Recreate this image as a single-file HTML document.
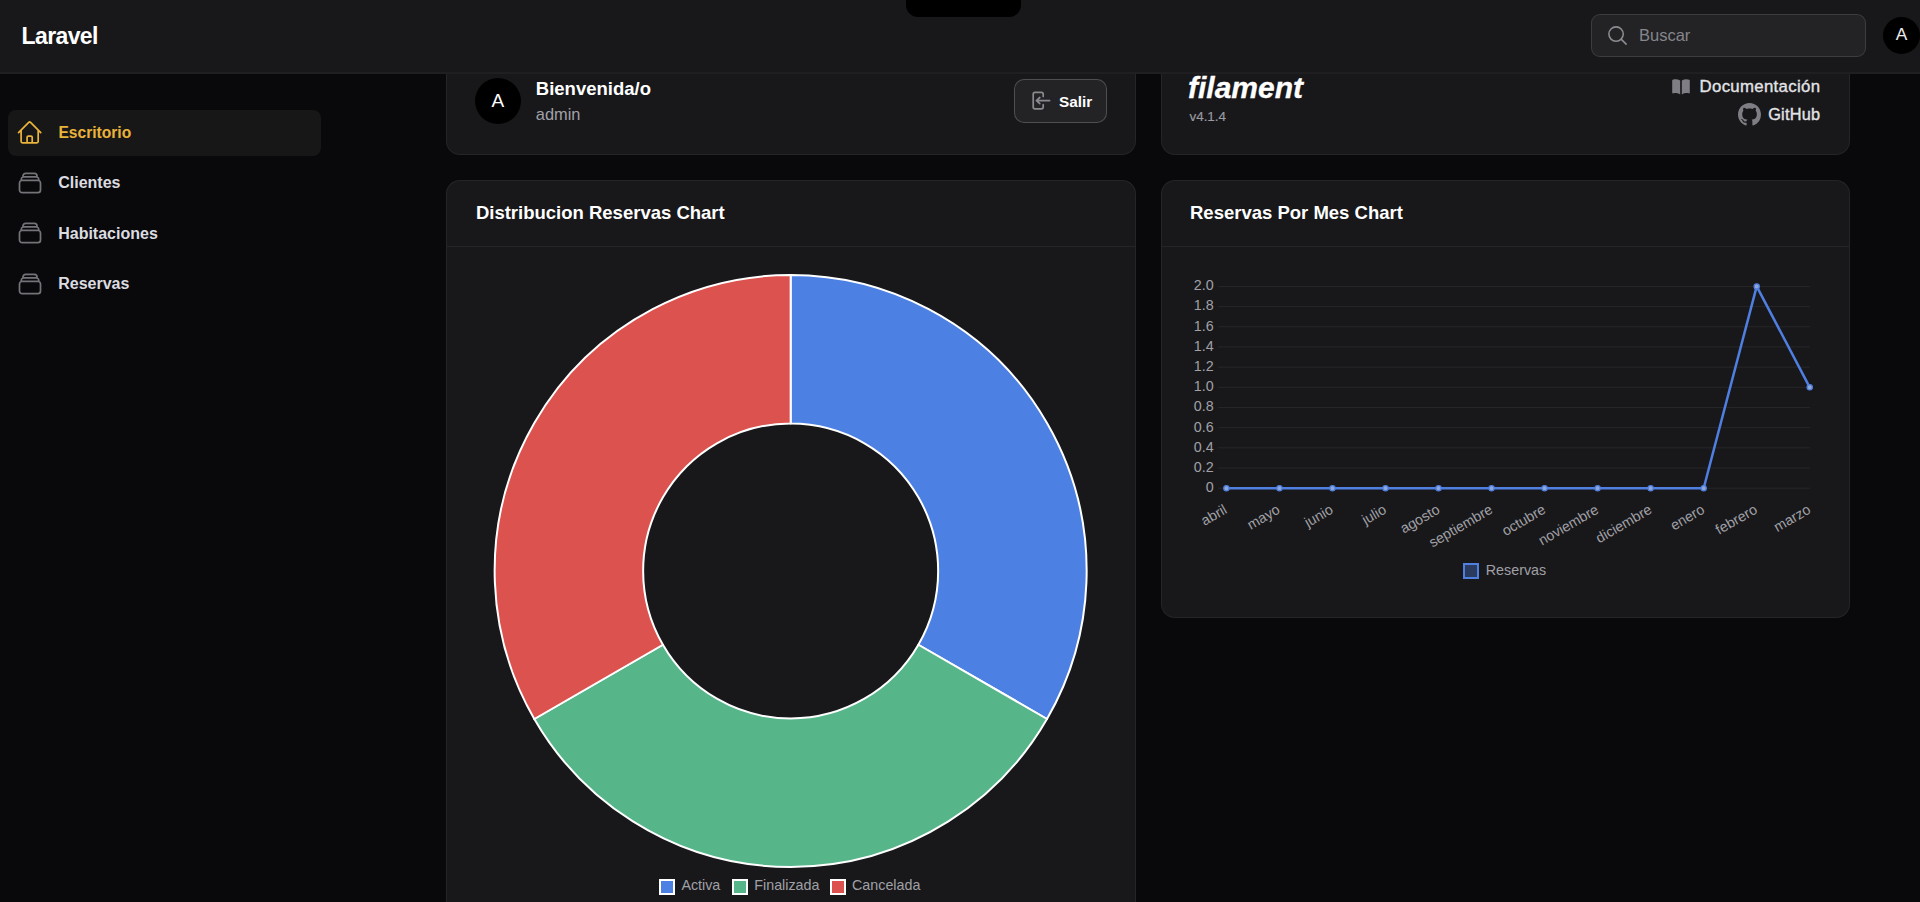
<!DOCTYPE html>
<html><head><meta charset="utf-8"><style>
html,body{margin:0;padding:0;}
body{width:1920px;height:902px;overflow:hidden;background:#09090b;position:relative;font-family:"Liberation Sans",sans-serif;}
.t{position:absolute;white-space:nowrap;}
</style></head><body>
<div style="position:absolute;left:8px;top:109.5px;width:313px;height:46.0px;background:#171718;border-radius:8px;"></div>
<svg style="position:absolute;left:16.4px;top:118.8px" width="27.3" height="27.3" viewBox="0 0 24 24" fill="none" stroke="#eab33a" stroke-width="1.5" stroke-linecap="round" stroke-linejoin="round"><path d="m2.25 12 8.954-8.955c.44-.439 1.152-.439 1.591 0L21.75 12M4.5 9.75v10.125c0 .621.504 1.125 1.125 1.125H9.75v-4.875c0-.621.504-1.125 1.125-1.125h2.25c.621 0 1.125.504 1.125 1.125V21h4.125c.621 0 1.125-.504 1.125-1.125V9.75M8.25 21h8.25"/></svg>
<div class="t" style="left:58.40px;top:124.99px;font-size:15.6px;line-height:15.6px;font-weight:700;color:#eab33a;">Escritorio</div>
<svg style="position:absolute;left:16.3px;top:168.8px" width="28" height="28" viewBox="0 0 24 24" fill="none" stroke="#737379" stroke-width="1.5" stroke-linecap="round" stroke-linejoin="round"><path d="M6 6.878V6a2.25 2.25 0 0 1 2.25-2.25h7.5A2.25 2.25 0 0 1 18 6v.878m-12 0c.235-.083.487-.128.75-.128h10.5c.263 0 .515.045.75.128m-12 0A2.25 2.25 0 0 0 4.5 9v.878m13.5-3A2.25 2.25 0 0 1 19.5 9v.878m0 0a2.246 2.246 0 0 0-.75-.128H5.25c-.263 0-.515.045-.75.128m15 0A2.25 2.25 0 0 1 21 12v6a2.25 2.25 0 0 1-2.25 2.25H5.25A2.25 2.25 0 0 1 3 18v-6c0-.98.626-1.813 1.5-2.122"/></svg>
<div class="t" style="left:58.20px;top:175.06px;font-size:16px;line-height:16px;font-weight:700;color:#dcdce0;">Clientes</div>
<svg style="position:absolute;left:16.3px;top:219.4px" width="28" height="28" viewBox="0 0 24 24" fill="none" stroke="#737379" stroke-width="1.5" stroke-linecap="round" stroke-linejoin="round"><path d="M6 6.878V6a2.25 2.25 0 0 1 2.25-2.25h7.5A2.25 2.25 0 0 1 18 6v.878m-12 0c.235-.083.487-.128.75-.128h10.5c.263 0 .515.045.75.128m-12 0A2.25 2.25 0 0 0 4.5 9v.878m13.5-3A2.25 2.25 0 0 1 19.5 9v.878m0 0a2.246 2.246 0 0 0-.75-.128H5.25c-.263 0-.515.045-.75.128m15 0A2.25 2.25 0 0 1 21 12v6a2.25 2.25 0 0 1-2.25 2.25H5.25A2.25 2.25 0 0 1 3 18v-6c0-.98.626-1.813 1.5-2.122"/></svg>
<div class="t" style="left:58.20px;top:225.56px;font-size:16px;line-height:16px;font-weight:700;color:#dcdce0;">Habitaciones</div>
<svg style="position:absolute;left:16.3px;top:270.0px" width="28" height="28" viewBox="0 0 24 24" fill="none" stroke="#737379" stroke-width="1.5" stroke-linecap="round" stroke-linejoin="round"><path d="M6 6.878V6a2.25 2.25 0 0 1 2.25-2.25h7.5A2.25 2.25 0 0 1 18 6v.878m-12 0c.235-.083.487-.128.75-.128h10.5c.263 0 .515.045.75.128m-12 0A2.25 2.25 0 0 0 4.5 9v.878m13.5-3A2.25 2.25 0 0 1 19.5 9v.878m0 0a2.246 2.246 0 0 0-.75-.128H5.25c-.263 0-.515.045-.75.128m15 0A2.25 2.25 0 0 1 21 12v6a2.25 2.25 0 0 1-2.25 2.25H5.25A2.25 2.25 0 0 1 3 18v-6c0-.98.626-1.813 1.5-2.122"/></svg>
<div class="t" style="left:58.20px;top:276.46px;font-size:16px;line-height:16px;font-weight:700;color:#dcdce0;">Reservas</div>
<div style="position:absolute;left:446px;top:-20px;width:689.5px;height:174.5px;background:#18181b;border:1px solid rgba(255,255,255,0.06);border-radius:14px;box-sizing:border-box;"></div>
<div style="position:absolute;left:475px;top:77.8px;width:46px;height:46.0px;background:#000;border-radius:50%;"></div>
<div class="t" style="left:491.60px;top:91.42px;font-size:19px;line-height:19px;font-weight:400;color:#fff;">A</div>
<div class="t" style="left:535.80px;top:79.74px;font-size:18.5px;line-height:18.5px;font-weight:700;color:#fff;">Bienvenida/o</div>
<div class="t" style="left:535.80px;top:105.92px;font-size:16.4px;line-height:16.4px;font-weight:400;color:#a1a1a8;">admin</div>
<div style="position:absolute;left:1014px;top:78.75px;width:93.25px;height:43.75px;background:#232326;border:1px solid rgba(255,255,255,0.2);border-radius:10px;box-sizing:border-box;"></div>
<svg style="position:absolute;left:0;top:0" width="1920" height="140" fill="none" stroke="#8a8a90" stroke-width="1.7" stroke-linecap="round" stroke-linejoin="round"><path d="M1043.2 96.5V94.2a1.8 1.8 0 0 0-1.8-1.8h-6.4a1.8 1.8 0 0 0-1.8 1.8v12.9a1.8 1.8 0 0 0 1.8 1.8h6.4a1.8 1.8 0 0 0 1.8-1.8V104.7M1049.6 100.6H1036.4m0 0 3.4-3.1m-3.4 3.1 3.4 3.1"/></svg>
<div class="t" style="left:1059.00px;top:93.75px;font-size:15.3px;line-height:15.3px;font-weight:700;color:#fff;">Salir</div>
<div style="position:absolute;left:1160.5px;top:-20px;width:689.0px;height:174.5px;background:#18181b;border:1px solid rgba(255,255,255,0.06);border-radius:14px;box-sizing:border-box;"></div>
<div class="t" style="left:1188.00px;top:72.61px;font-size:30px;line-height:30px;font-weight:700;color:#fff;font-style:italic;-webkit-text-stroke:0.3px #fff;">filament</div>
<div class="t" style="left:1189.50px;top:110.06px;font-size:13.4px;line-height:13.4px;font-weight:400;color:#9a9aa0;-webkit-text-stroke:0.2px #9a9aa0;">v4.1.4</div>
<svg style="position:absolute;left:1670px;top:76px" width="22" height="22" viewBox="0 0 20 20" fill="#7e7e84"><path d="M10.75 16.82A7.462 7.462 0 0 1 15 15.5c.71 0 1.396.098 2.046.282A.75.75 0 0 0 18 15.06v-11a.75.75 0 0 0-.546-.721A9.006 9.006 0 0 0 15 3a8.963 8.963 0 0 0-4.25 1.065V16.82ZM9.25 4.065A8.963 8.963 0 0 0 5 3c-.85 0-1.673.118-2.454.339A.75.75 0 0 0 2 4.06v11a.75.75 0 0 0 .954.721A7.506 7.506 0 0 1 5 15.5c1.579 0 3.042.487 4.25 1.32V4.065Z"/></svg>
<div class="t" style="right:99.70px;top:78.78px;font-size:16.8px;line-height:16.8px;font-weight:400;color:#e4e4e7;letter-spacing:0.32px;-webkit-text-stroke:0.35px #e4e4e7;">Documentación</div>
<svg style="position:absolute;left:1738px;top:102.8px" width="23" height="23" viewBox="0 0 16 16" fill="#7e7e84"><path d="M8 0C3.58 0 0 3.58 0 8c0 3.54 2.29 6.53 5.47 7.59.4.07.55-.17.55-.38 0-.19-.01-.82-.01-1.49-2.01.37-2.53-.49-2.69-.94-.09-.23-.48-.94-.82-1.13-.28-.15-.68-.52-.01-.53.63-.01 1.08.58 1.23.82.72 1.21 1.87.87 2.33.66.07-.52.28-.87.51-1.07-1.78-.2-3.64-.89-3.64-3.95 0-.87.31-1.59.82-2.15-.08-.2-.36-1.02.08-2.12 0 0 .67-.21 2.2.82.64-.18 1.32-.27 2-.27.68 0 1.36.09 2 .27 1.53-1.04 2.2-.82 2.2-.82.44 1.1.16 1.92.08 2.12.51.56.82 1.27.82 2.15 0 3.07-1.87 3.75-3.65 3.95.29.25.54.73.54 1.48 0 1.07-.01 1.93-.01 2.2 0 .21.15.46.55.38A8.013 8.013 0 0 0 16 8c0-4.42-3.58-8-8-8Z"/></svg>
<div class="t" style="right:99.70px;top:105.80px;font-size:16.3px;line-height:16.3px;font-weight:400;color:#e4e4e7;letter-spacing:0.25px;-webkit-text-stroke:0.35px #e4e4e7;">GitHub</div>
<div style="position:absolute;left:446px;top:180px;width:689.5px;height:780px;background:#18181b;border:1px solid rgba(255,255,255,0.06);border-radius:14px;box-sizing:border-box;"></div>
<div style="position:absolute;left:447px;top:246px;width:687.5px;height:1px;background:rgba(255,255,255,0.06);"></div>
<div class="t" style="left:475.90px;top:204.14px;font-size:18.5px;line-height:18.5px;font-weight:700;color:#fff;">Distribucion Reservas Chart</div>
<svg style="position:absolute;left:0;top:0" width="1920" height="902"><path d="M790.65 275.00 A296 296 0 0 1 1046.99 719.00 L918.39 644.75 A147.5 147.5 0 0 0 790.65 423.50 Z" fill="#4c80e3" stroke="#fff" stroke-width="2" stroke-linejoin="round"/><path d="M1046.99 719.00 A296 296 0 0 1 534.31 719.00 L662.91 644.75 A147.5 147.5 0 0 0 918.39 644.75 Z" fill="#56b68a" stroke="#fff" stroke-width="2" stroke-linejoin="round"/><path d="M534.31 719.00 A296 296 0 0 1 790.65 275.00 L790.65 423.50 A147.5 147.5 0 0 0 662.91 644.75 Z" fill="#dc524f" stroke="#fff" stroke-width="2" stroke-linejoin="round"/></svg>
<div style="position:absolute;left:659px;top:878.5px;width:16px;height:16.0px;background:#4c80e3;border:2px solid #fff;box-sizing:border-box;"></div>
<div class="t" style="left:681.40px;top:878.30px;font-size:14.3px;line-height:14.3px;font-weight:400;color:#a0a0a6;">Activa</div>
<div style="position:absolute;left:732px;top:878.5px;width:16px;height:16.0px;background:#56b68a;border:2px solid #fff;box-sizing:border-box;"></div>
<div class="t" style="left:754.30px;top:878.30px;font-size:14.3px;line-height:14.3px;font-weight:400;color:#a0a0a6;">Finalizada</div>
<div style="position:absolute;left:830px;top:878.5px;width:16px;height:16.0px;background:#dc524f;border:2px solid #fff;box-sizing:border-box;"></div>
<div class="t" style="left:852.00px;top:878.30px;font-size:14.3px;line-height:14.3px;font-weight:400;color:#a0a0a6;">Cancelada</div>
<div style="position:absolute;left:1160.5px;top:180px;width:689.0px;height:438px;background:#18181b;border:1px solid rgba(255,255,255,0.06);border-radius:14px;box-sizing:border-box;"></div>
<div style="position:absolute;left:1161.5px;top:246px;width:687.0px;height:1px;background:rgba(255,255,255,0.06);"></div>
<div class="t" style="left:1190.00px;top:204.09px;font-size:18.5px;line-height:18.5px;font-weight:700;color:#fff;">Reservas Por Mes Chart</div>
<svg style="position:absolute;left:0;top:0" width="1920" height="902"><line x1="1218.2" y1="488.20" x2="1809.8" y2="488.20" stroke="rgba(255,255,255,0.065)" stroke-width="1"/><line x1="1218.2" y1="468.02" x2="1809.8" y2="468.02" stroke="rgba(255,255,255,0.065)" stroke-width="1"/><line x1="1218.2" y1="447.84" x2="1809.8" y2="447.84" stroke="rgba(255,255,255,0.065)" stroke-width="1"/><line x1="1218.2" y1="427.66" x2="1809.8" y2="427.66" stroke="rgba(255,255,255,0.065)" stroke-width="1"/><line x1="1218.2" y1="407.48" x2="1809.8" y2="407.48" stroke="rgba(255,255,255,0.065)" stroke-width="1"/><line x1="1218.2" y1="387.30" x2="1809.8" y2="387.30" stroke="rgba(255,255,255,0.065)" stroke-width="1"/><line x1="1218.2" y1="367.12" x2="1809.8" y2="367.12" stroke="rgba(255,255,255,0.065)" stroke-width="1"/><line x1="1218.2" y1="346.94" x2="1809.8" y2="346.94" stroke="rgba(255,255,255,0.065)" stroke-width="1"/><line x1="1218.2" y1="326.76" x2="1809.8" y2="326.76" stroke="rgba(255,255,255,0.065)" stroke-width="1"/><line x1="1218.2" y1="306.58" x2="1809.8" y2="306.58" stroke="rgba(255,255,255,0.065)" stroke-width="1"/><line x1="1218.2" y1="286.40" x2="1809.8" y2="286.40" stroke="rgba(255,255,255,0.065)" stroke-width="1"/><polyline fill="none" stroke="#4f7fe0" stroke-width="2.5" stroke-linejoin="round" points="1226.40,488.20 1279.43,488.20 1332.46,488.20 1385.49,488.20 1438.52,488.20 1491.55,488.20 1544.58,488.20 1597.61,488.20 1650.64,488.20 1703.67,488.20 1756.70,286.40 1809.73,387.30"/><circle cx="1226.40" cy="488.20" r="2.6" fill="#8fa8d8" stroke="#4f7fe0" stroke-width="1.3"/><circle cx="1279.43" cy="488.20" r="2.6" fill="#8fa8d8" stroke="#4f7fe0" stroke-width="1.3"/><circle cx="1332.46" cy="488.20" r="2.6" fill="#8fa8d8" stroke="#4f7fe0" stroke-width="1.3"/><circle cx="1385.49" cy="488.20" r="2.6" fill="#8fa8d8" stroke="#4f7fe0" stroke-width="1.3"/><circle cx="1438.52" cy="488.20" r="2.6" fill="#8fa8d8" stroke="#4f7fe0" stroke-width="1.3"/><circle cx="1491.55" cy="488.20" r="2.6" fill="#8fa8d8" stroke="#4f7fe0" stroke-width="1.3"/><circle cx="1544.58" cy="488.20" r="2.6" fill="#8fa8d8" stroke="#4f7fe0" stroke-width="1.3"/><circle cx="1597.61" cy="488.20" r="2.6" fill="#8fa8d8" stroke="#4f7fe0" stroke-width="1.3"/><circle cx="1650.64" cy="488.20" r="2.6" fill="#8fa8d8" stroke="#4f7fe0" stroke-width="1.3"/><circle cx="1703.67" cy="488.20" r="2.6" fill="#8fa8d8" stroke="#4f7fe0" stroke-width="1.3"/><circle cx="1756.70" cy="286.40" r="2.6" fill="#8fa8d8" stroke="#4f7fe0" stroke-width="1.3"/><circle cx="1809.73" cy="387.30" r="2.6" fill="#8fa8d8" stroke="#4f7fe0" stroke-width="1.3"/></svg>
<div class="t" style="right:706.30px;top:480.10px;font-size:14.3px;line-height:14.3px;font-weight:400;color:#a0a0a6;">0</div>
<div class="t" style="right:706.30px;top:459.92px;font-size:14.3px;line-height:14.3px;font-weight:400;color:#a0a0a6;">0.2</div>
<div class="t" style="right:706.30px;top:439.74px;font-size:14.3px;line-height:14.3px;font-weight:400;color:#a0a0a6;">0.4</div>
<div class="t" style="right:706.30px;top:419.56px;font-size:14.3px;line-height:14.3px;font-weight:400;color:#a0a0a6;">0.6</div>
<div class="t" style="right:706.30px;top:399.38px;font-size:14.3px;line-height:14.3px;font-weight:400;color:#a0a0a6;">0.8</div>
<div class="t" style="right:706.30px;top:379.20px;font-size:14.3px;line-height:14.3px;font-weight:400;color:#a0a0a6;">1.0</div>
<div class="t" style="right:706.30px;top:359.02px;font-size:14.3px;line-height:14.3px;font-weight:400;color:#a0a0a6;">1.2</div>
<div class="t" style="right:706.30px;top:338.84px;font-size:14.3px;line-height:14.3px;font-weight:400;color:#a0a0a6;">1.4</div>
<div class="t" style="right:706.30px;top:318.66px;font-size:14.3px;line-height:14.3px;font-weight:400;color:#a0a0a6;">1.6</div>
<div class="t" style="right:706.30px;top:298.48px;font-size:14.3px;line-height:14.3px;font-weight:400;color:#a0a0a6;">1.8</div>
<div class="t" style="right:706.30px;top:278.30px;font-size:14.3px;line-height:14.3px;font-weight:400;color:#a0a0a6;">2.0</div>
<div class="t" style="right:697.60px;top:502px;font-size:14.3px;line-height:14.3px;color:#a0a0a6;transform-origin:100% 0;transform:rotate(-30deg)">abril</div>
<div class="t" style="right:644.57px;top:502px;font-size:14.3px;line-height:14.3px;color:#a0a0a6;transform-origin:100% 0;transform:rotate(-30deg)">mayo</div>
<div class="t" style="right:591.54px;top:502px;font-size:14.3px;line-height:14.3px;color:#a0a0a6;transform-origin:100% 0;transform:rotate(-30deg)">junio</div>
<div class="t" style="right:538.51px;top:502px;font-size:14.3px;line-height:14.3px;color:#a0a0a6;transform-origin:100% 0;transform:rotate(-30deg)">julio</div>
<div class="t" style="right:485.48px;top:502px;font-size:14.3px;line-height:14.3px;color:#a0a0a6;transform-origin:100% 0;transform:rotate(-30deg)">agosto</div>
<div class="t" style="right:432.45px;top:502px;font-size:14.3px;line-height:14.3px;color:#a0a0a6;transform-origin:100% 0;transform:rotate(-30deg)">septiembre</div>
<div class="t" style="right:379.42px;top:502px;font-size:14.3px;line-height:14.3px;color:#a0a0a6;transform-origin:100% 0;transform:rotate(-30deg)">octubre</div>
<div class="t" style="right:326.39px;top:502px;font-size:14.3px;line-height:14.3px;color:#a0a0a6;transform-origin:100% 0;transform:rotate(-30deg)">noviembre</div>
<div class="t" style="right:273.36px;top:502px;font-size:14.3px;line-height:14.3px;color:#a0a0a6;transform-origin:100% 0;transform:rotate(-30deg)">diciembre</div>
<div class="t" style="right:220.33px;top:502px;font-size:14.3px;line-height:14.3px;color:#a0a0a6;transform-origin:100% 0;transform:rotate(-30deg)">enero</div>
<div class="t" style="right:167.30px;top:502px;font-size:14.3px;line-height:14.3px;color:#a0a0a6;transform-origin:100% 0;transform:rotate(-30deg)">febrero</div>
<div class="t" style="right:114.27px;top:502px;font-size:14.3px;line-height:14.3px;color:#a0a0a6;transform-origin:100% 0;transform:rotate(-30deg)">marzo</div>
<div style="position:absolute;left:1463px;top:563px;width:16px;height:16px;background:rgba(79,127,224,0.35);border:2.5px solid #4f7fe0;box-sizing:border-box;"></div>
<div class="t" style="left:1485.80px;top:562.90px;font-size:14.3px;line-height:14.3px;font-weight:400;color:#a0a0a6;">Reservas</div>
<div style="position:absolute;left:0px;top:0px;width:1920px;height:74px;background:#18181b;border-bottom:2px solid #1f1f22;box-sizing:border-box;"></div>
<div style="position:absolute;left:906px;top:0px;width:115px;height:16.5px;background:#000;border-radius:0 0 12px 12px;"></div>
<div class="t" style="left:21.50px;top:24.53px;font-size:23px;line-height:23px;font-weight:700;color:#fff;letter-spacing:-0.6px;">Laravel</div>
<div style="position:absolute;left:1591px;top:13.5px;width:275px;height:43.5px;background:#232326;border:1px solid rgba(255,255,255,0.12);border-radius:9px;box-sizing:border-box;"></div>
<svg style="position:absolute;left:1606px;top:24px" width="23" height="23" viewBox="0 0 24 24" fill="none" stroke="#8c8c92" stroke-width="1.6" stroke-linecap="round"><path d="m21 21-5.197-5.197m0 0A7.5 7.5 0 1 0 5.196 5.196a7.5 7.5 0 0 0 10.607 10.607Z"/></svg>
<div class="t" style="left:1639.00px;top:27.28px;font-size:16.5px;line-height:16.5px;font-weight:400;color:#86868c;">Buscar</div>
<div style="position:absolute;left:1882.5px;top:16.5px;width:37.0px;height:37.0px;background:#000;border-radius:50%;"></div>
<div class="t" style="left:1895.80px;top:26.46px;font-size:17.3px;line-height:17.3px;font-weight:400;color:#ececec;">A</div>
</body></html>
